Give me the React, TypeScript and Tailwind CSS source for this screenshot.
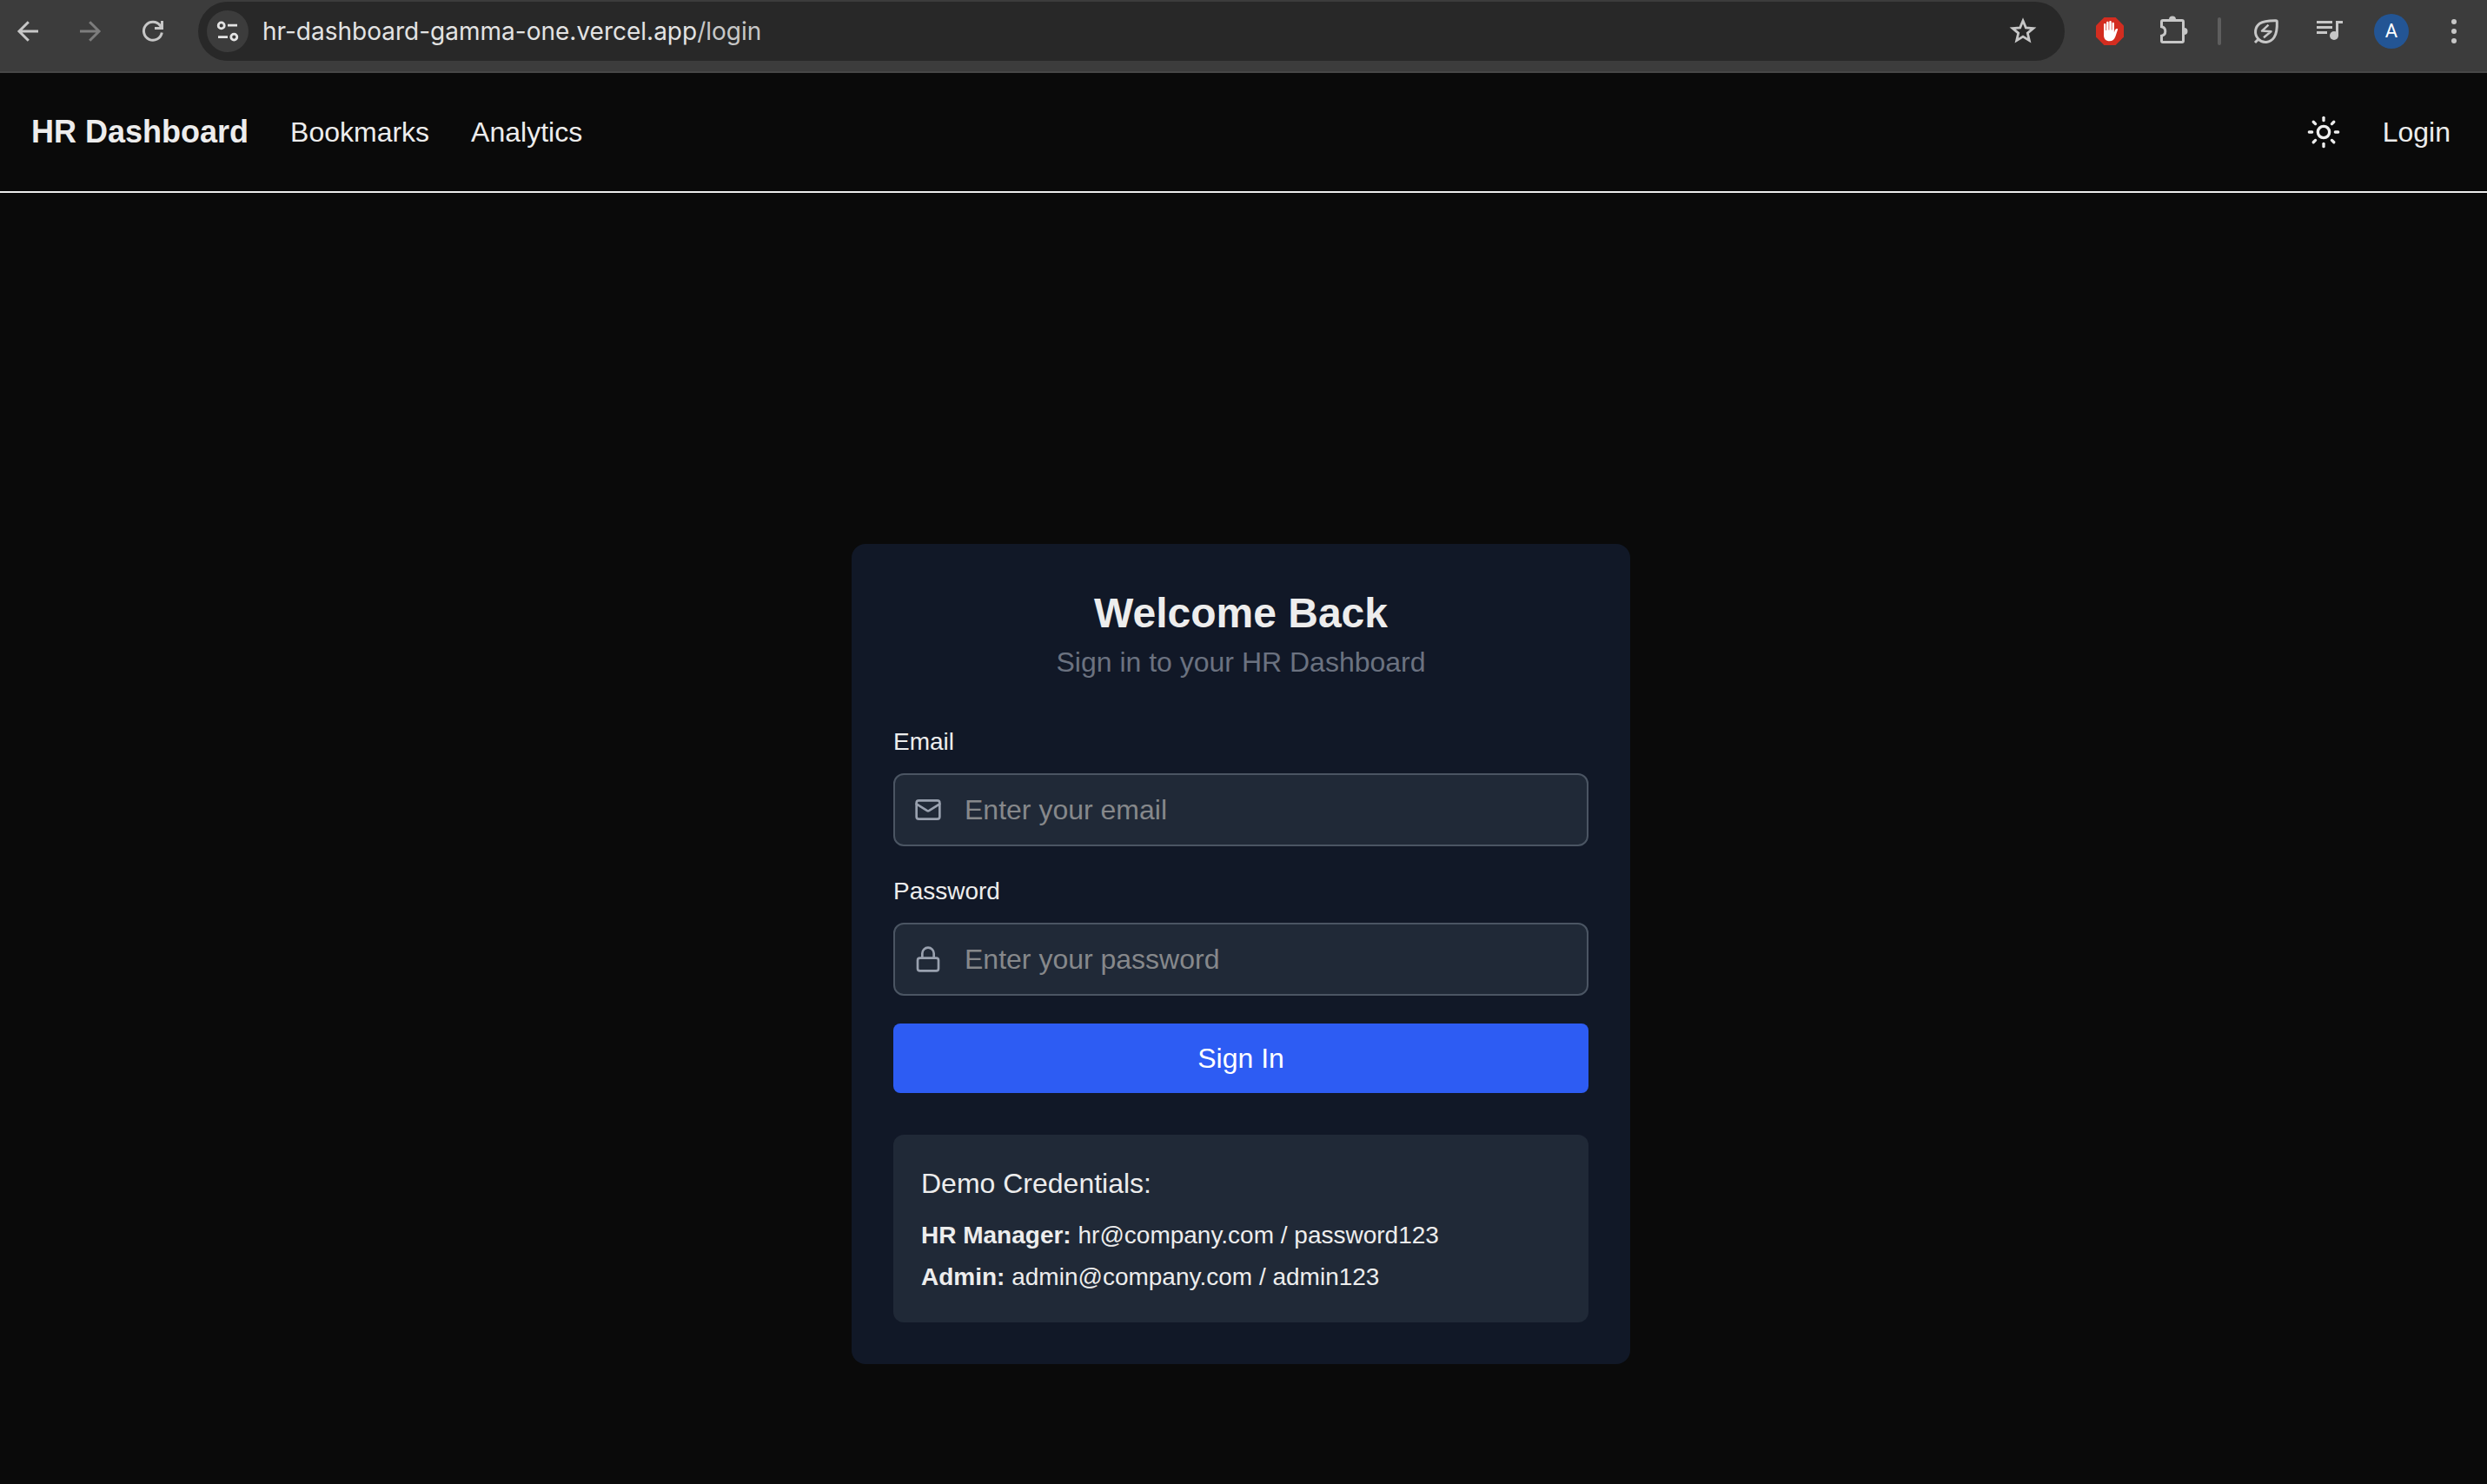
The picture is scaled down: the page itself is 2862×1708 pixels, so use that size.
import React from "react";
import { Lock, Mail, Sun } from "lucide-react";

const iconButton = "flex size-10 shrink-0 items-center justify-center";

function BackIcon() {
  return (
    <svg viewBox="0 0 40 40" className="size-10" fill="none" stroke="currentColor" strokeWidth="3">
      <path d="M32 20H10M20.8 9.2 10 20l10.8 10.8" />
    </svg>
  );
}

function ForwardIcon() {
  return (
    <svg viewBox="0 0 40 40" className="size-10" fill="none" stroke="currentColor" strokeWidth="3">
      <path d="M8 20h22M19.2 9.2 30 20 19.2 30.8" />
    </svg>
  );
}

function ReloadIcon() {
  return (
    <svg viewBox="0 0 40 40" className="size-10" fill="none" stroke="currentColor" strokeWidth="3">
      <path d="M30.3 21.5A10.5 10.5 0 1 1 28.4 13.5L30 16" />
      <path d="M30.5 8v8.5H22" />
    </svg>
  );
}

function TuneIcon() {
  return (
    <svg viewBox="0 0 28 28" className="size-7" fill="none" stroke="currentColor" strokeWidth="2.8">
      <circle cx="6.7" cy="7.4" r="3.5" />
      <path d="M14 7.2h11M3 20.6h11" />
      <circle cx="21.3" cy="20.6" r="3.5" />
    </svg>
  );
}

function StarIcon() {
  return (
    <svg viewBox="0 0 40 40" className="size-10" fill="none" stroke="currentColor" strokeWidth="2.8">
      <path d="M20 7.8l3.3 8 8.6.7-6.6 5.6 2 8.5L20 26.1l-7.3 4.5 2-8.5-6.6-5.6 8.6-.7z" />
    </svg>
  );
}

function BlockerIcon() {
  return (
    <svg viewBox="0 0 32 32" className="size-8">
      <path d="M9.4 0h13.2L32 9.4v13.2L22.6 32H9.4L0 22.6V9.4z" fill="#d32d20" />
      <path
        d="M9 8.2c0-1.7 2.4-1.7 2.4 0V15h.7V6c0-1.7 2.5-1.7 2.5 0v8.5h.7V5.2c0-1.7 2.5-1.7 2.5 0v9.3h.7V7c0-1.7 2.4-1.7 2.4 0v10.5l.9-2.8c.6-1.7 3.7-2.4 3.3-.7l-2.7 8c-1.2 3.5-3.4 5.3-6.8 5.3-4.2 0-6.6-2.7-6.6-6.8z"
        fill="#fff"
      />
    </svg>
  );
}

function PuzzleIcon() {
  return (
    <svg viewBox="0 0 40 40" className="size-10" fill="none" stroke="currentColor" strokeWidth="3">
      <path d="M9 7.5H31a1.5 1.5 0 0 1 1.5 1.5V31a1.5 1.5 0 0 1-1.5 1.5H9A1.5 1.5 0 0 1 7.5 31V25.2a5.3 5.3 0 0 0 0-10.4V9A1.5 1.5 0 0 1 9 7.5z" />
      <path d="M16 6.5a4 4 0 0 1 8 0zM33.5 16a4 4 0 0 1 0 8z" fill="currentColor" stroke="none" />
    </svg>
  );
}

function EnergyIcon() {
  return (
    <svg viewBox="0 0 40 40" className="size-10" fill="none" stroke="currentColor" strokeWidth="3" strokeLinejoin="round">
      <path d="M7 33 11 29M11 29C5.5 23 7 15 12.5 11c5-3.3 12-3.4 18.5-3.3.8 0 1.3.5 1.3 1.3.3 7-.3 13.5-3.3 18-4.5 6.5-13 7.5-18 2z" />
      <path d="M22.5 12.7 15 19.6l10.5.6-8.5 7" strokeWidth="2.5" />
    </svg>
  );
}

function MediaIcon() {
  return (
    <svg viewBox="0 0 40 40" className="size-10" fill="currentColor">
      <path d="M6 8h18v3H6zM6 14h18v3H6zM6 20h12v3H6zM28 8h8v3h-5v14h-3z" />
      <circle cx="26" cy="25" r="5" />
    </svg>
  );
}

function MoreIcon() {
  return (
    <svg viewBox="0 0 40 40" className="size-10" fill="currentColor">
      <circle cx="20" cy="9" r="3" />
      <circle cx="20" cy="20" r="3" />
      <circle cx="20" cy="31" r="3" />
    </svg>
  );
}

function BrowserBar() {
  return (
    <div className="flex h-[84px] items-start border-b-2 border-[#474747] bg-[#3c3c3c] pt-[2px] pr-[18px] pl-3 text-[#c7c7c7]">
      <div className="flex h-[68px] shrink-0 items-center gap-8">
        <button type="button" aria-label="Back" className={iconButton}>
          <BackIcon />
        </button>
        <button type="button" aria-label="Forward" className="flex size-10 shrink-0 items-center justify-center text-[#7d7d7d]">
          <ForwardIcon />
        </button>
        <button type="button" aria-label="Reload" className={iconButton}>
          <ReloadIcon />
        </button>
      </div>
      <div className="ml-8 flex h-[68px] min-w-0 flex-1 items-center rounded-full bg-[#282828] pr-7 pl-[10px]">
        <button
          type="button"
          aria-label="Site information"
          className="flex size-12 shrink-0 items-center justify-center rounded-full bg-[#3c3c3c] text-[#e3e3e3]"
        >
          <TuneIcon />
        </button>
        <p className="ml-4 min-w-0 flex-1 truncate font-[Inter,sans-serif] text-[28px] leading-10 text-[#e3e3e3]">
          hr-dashboard-gamma-one.vercel.app<span className="text-[#c7c7c7]">/login</span>
        </p>
        <button type="button" aria-label="Bookmark this page" className={iconButton}>
          <StarIcon />
        </button>
      </div>
      <div className="ml-8 flex h-[68px] shrink-0 items-center gap-8">
        <button type="button" aria-label="Content blocker" className={iconButton}>
          <BlockerIcon />
        </button>
        <button type="button" aria-label="Extensions" className={iconButton}>
          <PuzzleIcon />
        </button>
        <span className="h-8 w-1 rounded-full bg-[#5e5e5e]" />
        <button type="button" aria-label="Energy saver" className={iconButton}>
          <EnergyIcon />
        </button>
        <button type="button" aria-label="Media controls" className={iconButton}>
          <MediaIcon />
        </button>
        <button
          type="button"
          aria-label="Profile"
          className="flex size-10 shrink-0 items-center justify-center rounded-full bg-[#235594] font-[Roboto,sans-serif] text-[22px] leading-none text-white"
        >
          A
        </button>
        <button type="button" aria-label="Menu" className={iconButton}>
          <MoreIcon />
        </button>
      </div>
    </div>
  );
}

function SiteHeader() {
  return (
    <header className="flex items-center justify-between border-b-2 border-[#ededed] py-11 pr-[42px] pl-9 text-[32px] leading-[48px]">
      <nav className="flex items-center gap-12">
        <a href="#home" className="text-[36px] font-bold">
          HR Dashboard
        </a>
        <a href="#bookmarks">Bookmarks</a>
        <a href="#analytics">Analytics</a>
      </nav>
      <div className="flex items-center gap-12">
        <button type="button" aria-label="Toggle theme">
          <Sun className="size-10" />
        </button>
        <a href="#login">Login</a>
      </div>
    </header>
  );
}

type FieldProps = {
  id: string;
  label: string;
  type: string;
  placeholder: string;
  icon: React.ReactNode;
};

function Field({ id, label, type, placeholder, icon }: FieldProps) {
  return (
    <div>
      <label htmlFor={id} className="mb-4 block text-[28px] leading-10">
        {label}
      </label>
      <div className="relative">
        <span className="absolute inset-y-0 left-6 flex items-center text-[#99a1af]">{icon}</span>
        <input
          id={id}
          type={type}
          placeholder={placeholder}
          className="block w-full rounded-xl border-2 border-[#4b5563] bg-[#202937] py-4 pr-6 pl-20 text-[32px] leading-[48px] placeholder:text-[#86888b]"
        />
      </div>
    </div>
  );
}

function LoginCard() {
  return (
    <section className="w-full max-w-4xl rounded-2xl bg-[#111827] p-12">
      <div className="mb-12 text-center">
        <h1 className="text-[48px] leading-[64px] font-bold">Welcome Back</h1>
        <p className="text-[32px] leading-[48px] text-[#6b7280]">Sign in to your HR Dashboard</p>
      </div>
      <form className="flex flex-col gap-8" onSubmit={(e) => e.preventDefault()}>
        <Field id="email" label="Email" type="email" placeholder="Enter your email" icon={<Mail className="size-8" />} />
        <Field
          id="password"
          label="Password"
          type="password"
          placeholder="Enter your password"
          icon={<Lock className="size-8" />}
        />
        <button type="submit" className="w-full rounded-lg bg-[#2d5cf3] py-4 text-[32px] leading-[48px] text-white">
          Sign In
        </button>
      </form>
      <div className="mt-12 rounded-xl bg-[#202937] p-8">
        <h2 className="mb-4 text-[32px] leading-[48px]">Demo Credentials:</h2>
        <div className="flex flex-col gap-2 text-[28px] leading-10">
          <p>
            <strong>HR Manager:</strong> hr@company.com / password123
          </p>
          <p>
            <strong>Admin:</strong> admin@company.com / admin123
          </p>
        </div>
      </div>
    </section>
  );
}

export default function App() {
  return (
    <div className="flex min-h-screen flex-col bg-[#0a0a0a] font-['Liberation_Sans',Arial,sans-serif] text-[#ededed]">
      <BrowserBar />
      <SiteHeader />
      <main className="flex flex-1 items-center justify-center pt-[266px] pr-[6px]">
        <LoginCard />
      </main>
    </div>
  );
}
